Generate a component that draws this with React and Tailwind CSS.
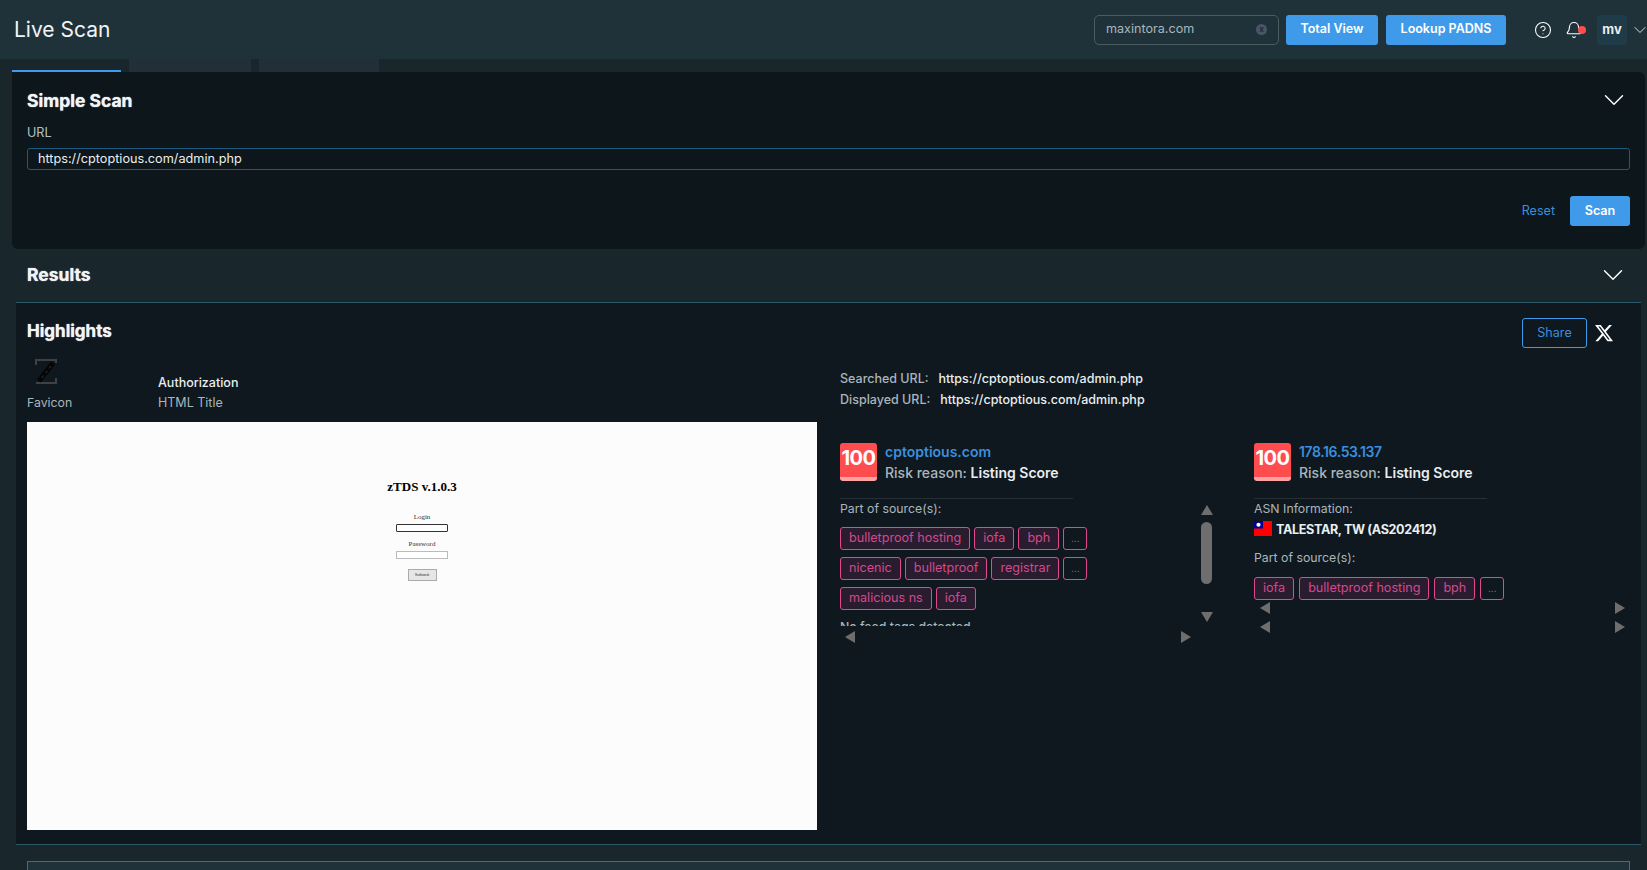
import React from "react";
import { CircleHelp, Bell, ChevronDown } from "lucide-react";
import { FaXTwitter } from "react-icons/fa6";

const Tri = ({ dir, className = "" }) => {
  const pts = { up: "0,10 6,0 12,10", down: "0,0 12,0 6,10", left: "10,0 10,12 0,6", right: "0,0 10,6 0,12" }[dir];
  const horiz = dir === "left" || dir === "right";
  return (
    <svg width={horiz ? 10 : 12} height={horiz ? 12 : 10} viewBox={horiz ? "0 0 10 12" : "0 0 12 10"} className={className}>
      <polygon points={pts} fill="#6e6e6e" />
    </svg>
  );
};

const Tag = ({ children }) => (
  <span className="h-[23px] px-[8px] flex items-center rounded-[3px] border border-[#e0498f] bg-[#2a1c2f] text-[12.6px] text-[#d24a8d] whitespace-nowrap">
    {children}
  </span>
);

const More = () => (
  <span className="h-[23px] w-[24px] flex items-center justify-center rounded-[3px] border border-[#e0498f] text-[10px] text-[#d24a8d]">
    ...
  </span>
);

const Score = () => (
  <div className="w-[37px] h-[38px] rounded-[3px] bg-[#ff4d4f] border-b-[4px] border-[#ffa3a3] flex items-start justify-center shrink-0 pt-[3px]">
    <span className="text-[20px] leading-[24px] font-bold text-white tracking-[-0.5px]">100</span>
  </div>
);

const CardHead = ({ name, nameClass = "" }) => (
  <div className="flex gap-2 h-[38px]">
    <Score />
    <div className="flex flex-col -mt-[1px]">
      <span className={`text-[14px] leading-[20px] font-semibold text-[#3a8fdd] ${nameClass}`}>{name}</span>
      <span className="text-[14px] leading-[21px] font-medium text-[#a9b6bd]">
        Risk reason: <span className="font-semibold text-[#e9eef0]">Listing Score</span>
      </span>
    </div>
  </div>
);

const Favicon = () => (
  <svg width="24" height="28" viewBox="0 0 24 28" fill="none">
    <path d="M2 7V2H22V5" stroke="#3f4144" strokeWidth="2" />
    <path d="M2 25H22V20" stroke="#3f4144" strokeWidth="2" />
    <path d="M19 5L5 23" stroke="#050505" strokeWidth="5" />
    <path d="M17 8L7 21" stroke="#3a3a3a" strokeWidth="1" strokeDasharray="3 3" />
  </svg>
);

const Flag = () => (
  <svg width="18" height="15" viewBox="0 0 18 15" className="shrink-0">
    <rect width="18" height="15" fill="#fe0000" />
    <rect width="9" height="7.5" fill="#000095" />
    <circle cx="4.5" cy="3.75" r="2.1" fill="#fff" />
  </svg>
);

export default function App() {
  return (
    <div className="w-full h-screen overflow-hidden bg-[#19272c] text-[#e9eef0] font-['Inter',sans-serif] flex flex-col">
      <header className="h-[59px] shrink-0 bg-[#1f323a] flex items-center pl-[14px] pr-0">
        <h1 className="text-[21px] font-normal text-[#f1f4f5]">Live Scan</h1>
        <div className="ml-auto flex items-center -mr-[3px]">
          <div className="w-[185px] h-[30px] rounded-[5px] border border-[#4b5c63] flex items-center pl-[11px] pr-[11px] text-[12.6px] text-[#aab6bc]">
            maxintora.com
            <span className="ml-auto w-[11px] h-[11px] rounded-full bg-[#4a5568] text-[#1f2a33] text-[8px] leading-[11px] text-center font-bold">x</span>
          </div>
          <button className="ml-[7px] w-[92px] h-[30px] rounded-[3px] bg-[#3f9bea] text-[12.5px] font-semibold text-white">Total View</button>
          <button className="ml-[8px] w-[120px] h-[30px] rounded-[3px] bg-[#3f9bea] text-[12.5px] font-semibold text-white">Lookup PADNS</button>
          <CircleHelp className="ml-[28px] w-[18px] h-[18px] text-white" strokeWidth={1.4} />
          <div className="relative ml-[13px] w-[18px] h-[18px]">
            <Bell className="w-[18px] h-[18px] text-white" strokeWidth={1.5} />
            <span className="absolute left-[13px] top-[5px] w-[8px] h-[8px] rounded-full bg-[#ff4d4f]" />
          </div>
          <div className="ml-[14px] w-[30px] h-[30px] rounded-[3px] bg-[#1f3b47] flex items-center justify-center text-[13px] font-bold text-[#e9eef0]">mv</div>
          <ChevronDown className="ml-[3px] w-[20px] h-[20px] text-[#d5dcdf]" strokeWidth={1.2} />
        </div>
      </header>

      <div className="flex h-[13px] shrink-0 pl-[12px] gap-[8px]">
        <div className="w-[109px] border-b-2 border-[#3f9bea]" />
        <div className="w-[122px] bg-[#212f36]" />
        <div className="w-[120px] bg-[#212f36]" />
      </div>

      <section className="ml-[12px] mr-[2px] h-[177px] shrink-0 rounded-b-md rounded-tr-md bg-[#0c161b] px-[15px] pt-[16px] flex flex-col">
        <div className="flex items-center justify-between h-[24px]">
          <h2 className="text-[17.5px] font-bold text-[#f1f4f5] mt-[2px] [text-shadow:0_0_1px_#f1f4f5]">Simple Scan</h2>
          <ChevronDown className="w-[34px] h-[34px] -my-[5px] -mr-[1px] text-white" strokeWidth={1} />
        </div>
        <label className="mt-[13px] text-[12.6px] leading-[16px] text-[#b4c0c6]">URL</label>
        <div className="mt-[7px] h-[22px] rounded-[3px] border border-[#1d5a80] flex items-center pl-[10px] text-[12.7px] text-[#e9eef0]">
          https://cptoptious.com/admin.php
        </div>
        <div className="mt-[26px] flex items-center justify-end">
          <button className="text-[12.6px] text-[#3a8fdd] mr-[15px]">Reset</button>
          <button className="w-[60px] h-[30px] rounded-[3px] bg-[#3f9bea] text-[12.6px] font-semibold text-white">Scan</button>
        </div>
      </section>

      <div className="h-[53px] shrink-0 flex items-center justify-between pl-[27px] pr-[17px]">
        <h2 className="text-[17.5px] font-bold text-[#f1f4f5] [text-shadow:0_0_1px_#f1f4f5]">Results</h2>
        <ChevronDown className="w-[34px] h-[34px] text-white -mt-[2px]" strokeWidth={1} />
      </div>

      <section className="ml-[16px] mr-[6px] h-[543px] shrink-0 border-y border-[#2a5a68] bg-[#0f181e] pl-[11px] pr-[11px] relative">
        <div className="flex items-center justify-between h-[30px] mt-[15px] pr-[16px]">
          <h2 className="text-[17px] font-bold text-[#f1f4f5] mb-[2px] [text-shadow:0_0_1px_#f1f4f5]">Highlights</h2>
          <div className="flex items-center">
            <button className="w-[65px] h-[30px] rounded-[3px] border border-[#3f9bea] text-[12.6px] text-[#3a8fdd]">Share</button>
            <FaXTwitter className="ml-[7px] w-[20px] h-[20px] text-white" />
          </div>
        </div>
        <div className="flex mt-[10px]">
          <div className="w-[790px] shrink-0">
            <div className="flex h-[64px]">
              <div className="w-[131px] flex flex-col">
                <div className="pl-[7px]"><Favicon /></div>
                <span className="text-[12.3px] leading-[16px] mt-[9px] text-[#a9b6bd]">Favicon</span>
              </div>
              <div className="flex flex-col pt-[17px]">
                <span className="text-[12.5px] leading-[16px] font-medium text-[#e9eef0]">Authorization</span>
                <span className="text-[12.5px] leading-[16px] mt-[4px] text-[#a9b6bd]">HTML Title</span>
              </div>
            </div>
            <div className="h-[408px] bg-[#fcfcfc] flex flex-col items-center pt-[57px] font-['Liberation_Serif',serif] text-black">
              <div className="text-[13px] font-bold leading-[16px]">zTDS v.1.0.3</div>
              <div className="mt-[18px] text-[7px] leading-[9px] text-[#333]">Login</div>
              <div className="mt-[2px] w-[52px] h-[8px] border border-[#333] rounded-[1px] bg-white" />
              <div className="mt-[8px] text-[7px] leading-[9px] text-[#333]">Password</div>
              <div className="mt-[2px] w-[52px] h-[8px] border border-[#bbb] bg-white" />
              <div className="mt-[10px] w-[29px] h-[12px] border border-[#aaa] bg-[#e6e6e6] text-[5px] leading-[10px] text-center text-[#333]">Submit</div>
            </div>
          </div>

          <div className="ml-[23px] flex-1 flex flex-col">
            <div className="text-[12.5px] leading-[21px] font-medium mt-[10px]">
              <div><span className="text-[#a9b6bd] mr-[10px]">Searched URL:</span><span className="text-[#e9eef0]">https://cptoptious.com/admin.php</span></div>
              <div><span className="text-[#a9b6bd] mr-[10px]">Displayed URL:</span><span className="text-[#e9eef0]">https://cptoptious.com/admin.php</span></div>
            </div>

            <div className="flex mt-[33px]">
              <div className="w-[414px] shrink-0 relative h-[203px]">
                <CardHead name="cptoptious.com" />
                <div className="w-[233px] border-t border-[#263034] mt-[17px]" />
                <div className="h-[127px] overflow-hidden">
                  <div className="text-[12.3px] leading-[18px] text-[#a9b6bd] mt-[1px]">Part of source(s):</div>
                  <div className="flex flex-col gap-[7px] mt-[9px]">
                    <div className="flex gap-[4px]"><Tag>bulletproof hosting</Tag><Tag>iofa</Tag><Tag>bph</Tag><More /></div>
                    <div className="flex gap-[4px]"><Tag>nicenic</Tag><Tag>bulletproof</Tag><Tag>registrar</Tag><More /></div>
                    <div className="flex gap-[4px]"><Tag>malicious ns</Tag><Tag>iofa</Tag></div>
                  </div>
                  <div className="text-[12.3px] leading-[18px] font-medium text-[#a9b6bd] mt-[8px]">No feed tags detected</div>
                </div>
                <Tri dir="up" className="absolute left-[361px] top-[62px]" />
                <div className="absolute left-[361px] top-[79px] w-[11px] h-[62px] rounded-full bg-[#6e6e6e]" />
                <Tri dir="down" className="absolute left-[361px] top-[169px]" />
                <Tri dir="left" className="absolute left-[5px] top-[188px]" />
                <Tri dir="right" className="absolute left-[341px] top-[188px]" />
              </div>

              <div className="flex-1 relative h-[203px]">
                <CardHead name="178.16.53.137" nameClass="tracking-[-0.4px]" />
                <div className="w-[233px] border-t border-[#263034] mt-[17px]" />
                <div className="text-[12.3px] leading-[18px] text-[#a9b6bd] mt-[1px]">ASN Information:</div>
                <div className="flex items-start gap-[4px] mt-[3px] h-[15px]">
                  <Flag />
                  <span className="text-[12.6px] leading-[18px] font-bold text-[#e9eef0] tracking-[-0.35px]">TALESTAR, TW (AS202412)</span>
                </div>
                <div className="text-[12.3px] leading-[18px] text-[#a9b6bd] mt-[13px]">Part of source(s):</div>
                <div className="flex gap-[5px] mt-[10px]"><Tag>iofa</Tag><Tag>bulletproof hosting</Tag><Tag>bph</Tag><More /></div>
                <Tri dir="left" className="absolute left-[6px] top-[159px]" />
                <Tri dir="right" className="absolute left-[361px] top-[159px]" />
                <Tri dir="left" className="absolute left-[6px] top-[178px]" />
                <Tri dir="right" className="absolute left-[361px] top-[178px]" />
              </div>
            </div>
          </div>
        </div>
      </section>

      <div className="ml-[27px] mr-[17px] mt-[16px] h-[40px] shrink-0 border border-[#55666c] bg-[#1f323a]" />
    </div>
  );
}
